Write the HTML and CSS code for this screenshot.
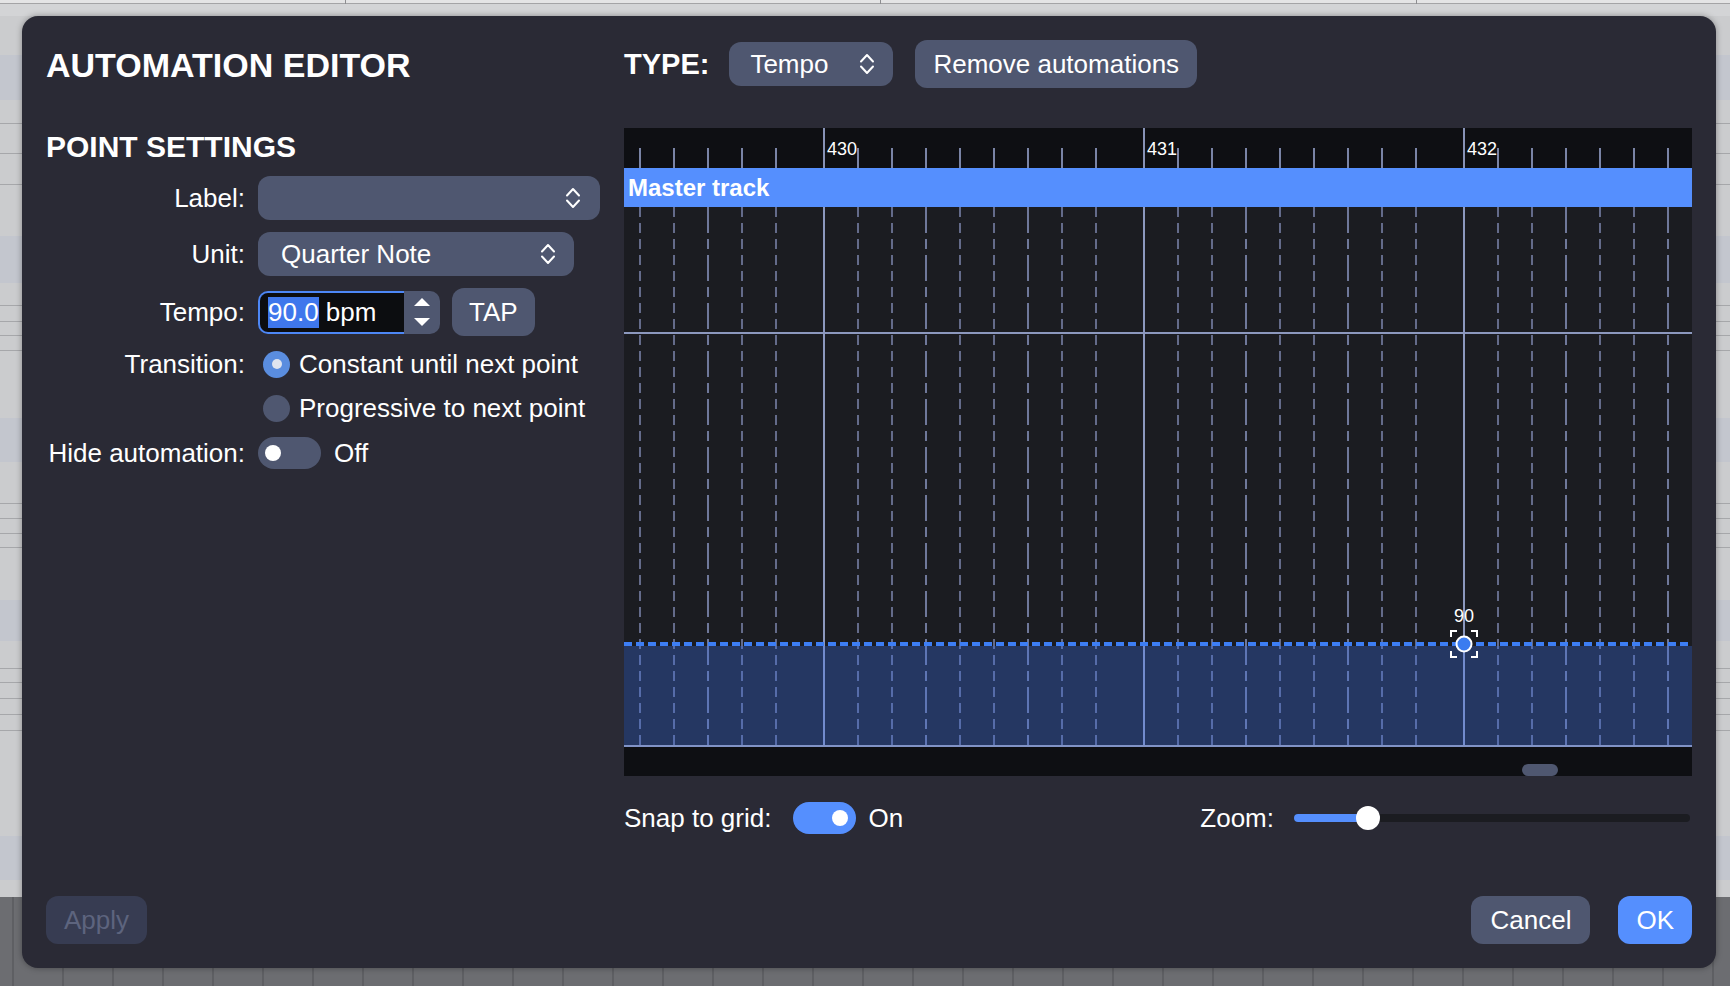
FILE: index.html
```html
<!DOCTYPE html>
<html lang="en">
<head>
<meta charset="utf-8">
<title>Automation Editor</title>
<link rel="stylesheet" href="styles.css">
</head>
<body>
<div class="app">
  <div class="app-top"><span class="top-tick t1"></span><span class="top-tick t2"></span><span class="top-tick t3"></span></div>
  <div class="app-tracks"></div>
  <div class="app-bottom"></div>

  <div class="dialog">
    <div class="dialog-body">
      <section class="left-col">
        <h1 class="title">AUTOMATION EDITOR</h1>
        <h2 class="section-title">POINT SETTINGS</h2>
        <div class="form">
          <div class="form-row row-select">
            <span class="form-label">Label:</span>
            <div class="select select-label">
              <span class="select-value"></span>
              <svg class="chev" width="16" height="24" viewBox="0 0 16 24"><path d="M2 9.5 L8 3 L14 9.5 M2 14.5 L8 21 L14 14.5" fill="none" stroke="#fff" stroke-width="2" stroke-linecap="round" stroke-linejoin="round"/></svg>
            </div>
          </div>
          <div class="form-row row-select">
            <span class="form-label">Unit:</span>
            <div class="select select-unit">
              <span class="select-value">Quarter Note</span>
              <svg class="chev" width="16" height="24" viewBox="0 0 16 24"><path d="M2 9.5 L8 3 L14 9.5 M2 14.5 L8 21 L14 14.5" fill="none" stroke="#fff" stroke-width="2" stroke-linecap="round" stroke-linejoin="round"/></svg>
            </div>
          </div>
          <div class="form-row row-tempo">
            <span class="form-label">Tempo:</span>
            <div class="number-field">
              <div class="number-input"><span class="sel-text">90.0</span>&nbsp;bpm</div>
              <div class="stepper">
                <svg width="16" height="8" viewBox="0 0 16 8"><path d="M8 0 L16 8 L0 8 Z" fill="#fff"/></svg>
                <svg width="16" height="8" viewBox="0 0 16 8"><path d="M0 0 L16 0 L8 8 Z" fill="#fff"/></svg>
              </div>
            </div>
            <button class="btn btn-tap">TAP</button>
          </div>
          <div class="form-row row-transition">
            <span class="form-label">Transition:</span>
            <div class="radio-group">
              <div class="radio-option"><span class="radio radio-on"></span>Constant until next point</div>
              <div class="radio-option"><span class="radio"></span>Progressive to next point</div>
            </div>
          </div>
          <div class="form-row row-hide">
            <span class="form-label">Hide automation:</span>
            <span class="toggle"><span class="knob"></span></span>
            <span class="toggle-text">Off</span>
          </div>
        </div>
      </section>

      <section class="right-col">
        <div class="header">
          <span class="type-label">TYPE:</span>
          <div class="select select-type">
            <span class="select-value">Tempo</span>
            <svg class="chev" width="16" height="24" viewBox="0 0 16 24"><path d="M2 9.5 L8 3 L14 9.5 M2 14.5 L8 21 L14 14.5" fill="none" stroke="#fff" stroke-width="2" stroke-linecap="round" stroke-linejoin="round"/></svg>
          </div>
          <button class="btn btn-remove">Remove automations</button>
        </div>

        <div class="chart">
          <svg class="ruler" width="1068" height="40" viewBox="0 0 1068 40">
            <g stroke="#7a84a6" stroke-width="2">
              <line x1="16" y1="20" x2="16" y2="40"/><line x1="50" y1="20" x2="50" y2="40"/><line x1="84" y1="20" x2="84" y2="40"/><line x1="118" y1="20" x2="118" y2="40"/><line x1="152" y1="20" x2="152" y2="40"/>
              <line x1="234" y1="20" x2="234" y2="40"/><line x1="268" y1="20" x2="268" y2="40"/><line x1="302" y1="20" x2="302" y2="40"/><line x1="336" y1="20" x2="336" y2="40"/><line x1="370" y1="20" x2="370" y2="40"/><line x1="404" y1="20" x2="404" y2="40"/><line x1="438" y1="20" x2="438" y2="40"/><line x1="472" y1="20" x2="472" y2="40"/>
              <line x1="554" y1="20" x2="554" y2="40"/><line x1="588" y1="20" x2="588" y2="40"/><line x1="622" y1="20" x2="622" y2="40"/><line x1="656" y1="20" x2="656" y2="40"/><line x1="690" y1="20" x2="690" y2="40"/><line x1="724" y1="20" x2="724" y2="40"/><line x1="758" y1="20" x2="758" y2="40"/><line x1="792" y1="20" x2="792" y2="40"/>
              <line x1="874" y1="20" x2="874" y2="40"/><line x1="908" y1="20" x2="908" y2="40"/><line x1="942" y1="20" x2="942" y2="40"/><line x1="976" y1="20" x2="976" y2="40"/><line x1="1010" y1="20" x2="1010" y2="40"/><line x1="1044" y1="20" x2="1044" y2="40"/>
            </g>
            <g stroke="#8792b6" stroke-width="2">
              <line x1="200" y1="0" x2="200" y2="40"/><line x1="520" y1="0" x2="520" y2="40"/><line x1="840" y1="0" x2="840" y2="40"/>
            </g>
            <g class="ruler-labels" fill="#fff">
              <text x="203" y="27">430</text><text x="523" y="27">431</text><text x="843" y="27">432</text>
            </g>
          </svg>

          <div class="track-bar">Master track</div>

          <svg class="grid" width="1068" height="540" viewBox="0 0 1068 540">
            <g stroke="#646b8a" stroke-width="2" stroke-dasharray="10 6">
              <line x1="16" y1="0" x2="16" y2="539"/><line x1="50" y1="0" x2="50" y2="539"/><line x1="118" y1="0" x2="118" y2="539"/><line x1="152" y1="0" x2="152" y2="539"/>
              <line x1="234" y1="0" x2="234" y2="539"/><line x1="268" y1="0" x2="268" y2="539"/><line x1="336" y1="0" x2="336" y2="539"/><line x1="370" y1="0" x2="370" y2="539"/><line x1="438" y1="0" x2="438" y2="539"/><line x1="472" y1="0" x2="472" y2="539"/>
              <line x1="554" y1="0" x2="554" y2="539"/><line x1="588" y1="0" x2="588" y2="539"/><line x1="656" y1="0" x2="656" y2="539"/><line x1="690" y1="0" x2="690" y2="539"/><line x1="758" y1="0" x2="758" y2="539"/><line x1="792" y1="0" x2="792" y2="539"/>
              <line x1="874" y1="0" x2="874" y2="539"/><line x1="908" y1="0" x2="908" y2="539"/><line x1="976" y1="0" x2="976" y2="539"/><line x1="1010" y1="0" x2="1010" y2="539"/>
            </g>
            <g stroke="#6f789a" stroke-width="2" stroke-dasharray="26 6 10 6">
              <line x1="84" y1="0" x2="84" y2="540"/><line x1="302" y1="0" x2="302" y2="540"/><line x1="404" y1="0" x2="404" y2="540"/><line x1="622" y1="0" x2="622" y2="540"/><line x1="724" y1="0" x2="724" y2="540"/><line x1="942" y1="0" x2="942" y2="540"/><line x1="1044" y1="0" x2="1044" y2="540"/>
            </g>
            <g stroke="#8c98be" stroke-width="2">
              <line x1="200" y1="0" x2="200" y2="540"/><line x1="520" y1="0" x2="520" y2="540"/><line x1="840" y1="0" x2="840" y2="540"/>
              <line x1="0" y1="126" x2="1068" y2="126"/>
            </g>
            <rect x="0" y="439" width="1068" height="99" fill="rgba(58,112,236,0.32)"/>
            <line x1="0" y1="539" x2="1068" y2="539" stroke="#8193c6" stroke-width="2"/>
            <line x1="0" y1="437" x2="1068" y2="437" stroke="#3d7ef5" stroke-width="4" stroke-dasharray="8 4"/>
            <text class="point-label" x="840" y="415" text-anchor="middle" fill="#fff">90</text>
            <path d="M827 430 V424 H833 M847 424 H853 V430 M853 444 V450 H847 M833 450 H827 V444" fill="none" stroke="#fff" stroke-width="2"/>
            <circle cx="840" cy="437" r="7.5" fill="#3b7cf0" stroke="#fff" stroke-width="2"/>
          </svg>

          <div class="scrollbar"><span class="thumb"></span></div>
        </div>

        <div class="controls">
          <div class="snap">
            <span class="ctl-label">Snap to grid:</span>
            <span class="toggle toggle-on"><span class="knob"></span></span>
            <span class="toggle-text">On</span>
          </div>
          <div class="zoom">
            <span class="ctl-label">Zoom:</span>
            <div class="slider">
              <div class="slider-track"><div class="slider-fill"></div></div>
              <span class="slider-knob"></span>
            </div>
          </div>
        </div>
      </section>
    </div>

    <div class="dialog-footer">
      <button class="btn btn-apply">Apply</button>
      <div class="footer-right">
        <button class="btn btn-cancel">Cancel</button>
        <button class="btn btn-ok">OK</button>
      </div>
    </div>
  </div>
</div>
</body>
</html>
```

FILE: styles.css
```css
* { box-sizing: border-box; }

html, body {
  margin: 0;
  padding: 0;
}

body {
  width: 1730px;
  height: 986px;
  overflow: hidden;
  font-family: "Liberation Sans", Arial, Helvetica, sans-serif;
  color: #fff;
}

/* ---------- background application ---------- */
.app {
  position: relative;
  width: 1730px;
  height: 986px;
  display: flex;
  flex-direction: column;
  overflow: hidden;
  background: #cbccce;
}

.app-top {
  position: relative;
  height: 16px;
  flex: none;
  background: linear-gradient(to bottom, #e4e4e5 0, #e4e4e5 3px, #a4a4a6 3px, #a4a4a6 4px, #d3d4d6 4px);
}

.top-tick {
  position: absolute;
  top: 0;
  width: 1px;
  height: 4px;
  background: #8d8d90;
}
.t1 { left: 345px; }
.t2 { left: 880px; }
.t3 { left: 1416px; }

.app-tracks {
  flex: none;
  height: 881px;
  background: linear-gradient(to bottom,
    #cbccce 0, #cbccce 39px,
    #c3c6ce 39px, #c3c6ce 84px,
    #cbccce 84px, #cbccce 107px,
    #a6a7aa 107px, #a6a7aa 108px,
    #cbccce 108px, #cbccce 137px,
    #a6a7aa 137px, #a6a7aa 138px,
    #cbccce 138px, #cbccce 168px,
    #a6a7aa 168px, #a6a7aa 169px,
    #cbccce 169px, #cbccce 220px,
    #c3c6ce 220px, #c3c6ce 267px,
    #cbccce 267px, #cbccce 289px,
    #a6a7aa 289px, #a6a7aa 290px,
    #cbccce 290px, #cbccce 305px,
    #a6a7aa 305px, #a6a7aa 306px,
    #cbccce 306px, #cbccce 319px,
    #a6a7aa 319px, #a6a7aa 320px,
    #cbccce 320px, #cbccce 334px,
    #a6a7aa 334px, #a6a7aa 335px,
    #cbccce 335px, #cbccce 402px,
    #c3c6ce 402px, #c3c6ce 446px,
    #cbccce 446px, #cbccce 487px,
    #a6a7aa 487px, #a6a7aa 488px,
    #cbccce 488px, #cbccce 502px,
    #a6a7aa 502px, #a6a7aa 503px,
    #cbccce 503px, #cbccce 517px,
    #a6a7aa 517px, #a6a7aa 518px,
    #cbccce 518px, #cbccce 531px,
    #a6a7aa 531px, #a6a7aa 532px,
    #cbccce 532px, #cbccce 584px,
    #c3c6ce 584px, #c3c6ce 625px,
    #cbccce 625px, #cbccce 652px,
    #a6a7aa 652px, #a6a7aa 653px,
    #cbccce 653px, #cbccce 666px,
    #a6a7aa 666px, #a6a7aa 667px,
    #cbccce 667px, #cbccce 682px,
    #a6a7aa 682px, #a6a7aa 683px,
    #cbccce 683px, #cbccce 698px,
    #a6a7aa 698px, #a6a7aa 699px,
    #cbccce 699px, #cbccce 714px,
    #a6a7aa 714px, #a6a7aa 715px,
    #cbccce 715px, #cbccce 820px,
    #c3c6ce 820px, #c3c6ce 864px,
    #cbccce 864px);
}

.app-bottom {
  flex: 1;
  background:
    repeating-linear-gradient(to right, transparent 0, transparent 12px, #5e5f63 12px, #5e5f63 14px, transparent 14px, transparent 50px),
    #6c6d71;
}

/* ---------- dialog ---------- */
.dialog {
  position: absolute;
  left: 22px;
  top: 16px;
  width: 1694px;
  height: 952px;
  padding: 24px;
  border-radius: 16px;
  background: #2a2a35;
  box-shadow: 0 0 6px rgba(0, 0, 0, 0.35);
  display: flex;
  flex-direction: column;
}

.dialog-body {
  display: flex;
  gap: 24px;
}

.left-col {
  width: 554px;
  flex: none;
}

.right-col {
  width: 1068px;
  flex: none;
}

.title {
  margin: 0;
  font-size: 34px;
  font-weight: bold;
  line-height: 50px;
}

.section-title {
  margin: 40px 0 0;
  font-size: 30px;
  font-weight: bold;
  line-height: 34px;
}

.form {
  margin-top: 12px;
  font-size: 26px;
}

.form-row {
  display: flex;
  align-items: center;
}

.form-label {
  width: 199px;
  margin-right: 13px;
  text-align: right;
  flex: none;
  white-space: nowrap;
}

.row-select { height: 44px; margin-bottom: 12px; }
.row-tempo { height: 48px; }

.row-transition {
  align-items: flex-start;
  margin-top: 8px;
}
.row-transition .form-label { line-height: 40px; }

.row-hide {
  height: 32px;
  margin-top: 9px;
}

/* selects */
.select {
  height: 44px;
  border-radius: 12px;
  background: #4f5770;
  display: flex;
  align-items: center;
  justify-content: space-between;
  font-size: 26px;
  color: #fff;
}
.select .chev { flex: none; display: block; }

.select-label { width: 342px; padding: 0 19px 0 22px; }
.select-unit { width: 316px; padding: 0 18px 0 23px; }
.select-type { width: 164px; padding: 0 18px 0 21px; }

/* number field */
.number-field {
  display: flex;
  height: 43px;
}

.number-input {
  width: 146px;
  height: 43px;
  border: 2px solid #4d87f6;
  border-right: none;
  border-radius: 10px 0 0 10px;
  background: #0c0d10;
  padding-left: 8px;
  display: flex;
  align-items: center;
  font-size: 26px;
  white-space: nowrap;
}

.sel-text {
  display: inline-block;
  height: 31px;
  line-height: 31px;
  background: #3f77ec;
  color: #fff;
}

.stepper {
  width: 36px;
  height: 43px;
  border-radius: 0 10px 10px 0;
  background: #4f5770;
  display: flex;
  flex-direction: column;
  align-items: center;
  justify-content: center;
  gap: 12px;
}
.stepper svg { display: block; }

/* buttons */
.btn {
  height: 48px;
  padding: 0 18px;
  border: none;
  border-radius: 12px;
  background: #4f5770;
  color: #fff;
  font-family: "Liberation Sans", Arial, Helvetica, sans-serif;
  font-size: 26px;
  line-height: 48px;
  white-space: nowrap;
}

.btn-tap { margin-left: 12px; padding: 0 17px; }
.btn-apply { background: #373c52; color: #5d647e; }
.btn-cancel { padding: 0 19px; }
.btn-ok { background: #558ffe; padding: 0 18px; }

/* radios */
.radio-group {
  display: flex;
  flex-direction: column;
  gap: 4px;
}

.radio-option {
  height: 40px;
  display: flex;
  align-items: center;
  white-space: nowrap;
}

.radio {
  width: 27px;
  height: 27px;
  border-radius: 50%;
  background: #4f5770;
  margin: 0 9px 0 5px;
  flex: none;
  display: flex;
  align-items: center;
  justify-content: center;
}

.radio-on { background: #5a8ddf; }
.radio-on::after {
  content: "";
  width: 10px;
  height: 10px;
  border-radius: 50%;
  background: #dfe4ef;
}

/* toggles */
.toggle {
  width: 63px;
  height: 32px;
  border-radius: 16px;
  background: #4f5770;
  display: flex;
  align-items: center;
  padding: 0 7px;
  flex: none;
}

.toggle-on {
  background: #558ffe;
  justify-content: flex-end;
  padding: 0 8px;
}

.knob {
  width: 16px;
  height: 16px;
  border-radius: 50%;
  background: #fff;
}

.toggle-text { margin-left: 13px; }

/* right column */
.header {
  height: 48px;
  display: flex;
  align-items: center;
}

.type-label {
  font-size: 29px;
  font-weight: bold;
  margin-right: 20px;
}

.select-type { margin-right: 22px; }

.chart {
  margin-top: 40px;
  width: 1068px;
  display: flex;
  flex-direction: column;
}

.ruler {
  display: block;
  background: #0e0f13;
}

.ruler-labels text {
  font-family: "Liberation Sans", Arial, sans-serif;
  font-size: 18px;
}

.track-bar {
  height: 39px;
  background: #558ffe;
  padding-left: 4px;
  font-size: 24px;
  font-weight: bold;
  line-height: 39px;
  white-space: nowrap;
}

.grid {
  display: block;
  background: #1b1c21;
}

.point-label {
  font-family: "Liberation Sans", Arial, sans-serif;
  font-size: 18px;
}

.scrollbar {
  height: 29px;
  background: #0e0f13;
  display: flex;
  align-items: flex-end;
}

.thumb {
  width: 36px;
  height: 12px;
  margin-left: 898px;
  border-radius: 6px;
  background: #4f5770;
}

.controls {
  margin-top: 26px;
  height: 32px;
  display: flex;
  align-items: center;
  justify-content: space-between;
  font-size: 26px;
}

.snap, .zoom {
  display: flex;
  align-items: center;
}

.snap .ctl-label { margin-right: 22px; }
.snap .toggle-text { margin-left: 12px; }

.zoom .ctl-label { margin-right: 20px; }

.slider {
  position: relative;
  width: 396px;
  height: 24px;
  margin-right: 2px;
  display: flex;
  align-items: center;
}

.slider-track {
  width: 100%;
  height: 8px;
  border-radius: 4px;
  background: #1b1c21;
  overflow: hidden;
}

.slider-fill {
  width: 74px;
  height: 8px;
  background: #558ffe;
}

.slider-knob {
  position: absolute;
  left: 62px;
  top: 0;
  width: 24px;
  height: 24px;
  border-radius: 50%;
  background: #fff;
}

/* footer */
.dialog-footer {
  margin-top: auto;
  display: flex;
  justify-content: space-between;
  align-items: center;
}

.footer-right {
  display: flex;
  gap: 28px;
}
```
